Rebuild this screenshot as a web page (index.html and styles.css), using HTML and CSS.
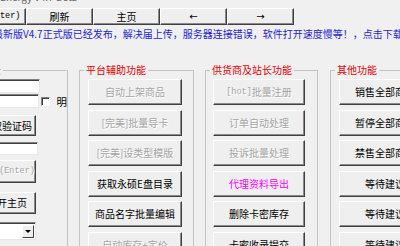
FILE: index.html
```html
<!DOCTYPE html>
<html>
<head>
  <meta charset="UTF-8">
  <title>平台工具</title>
  <link rel="stylesheet" href="styles.css">
</head>
<body>
  <div class="title-strip"><span>Energy v4.7 Beta</span></div>

  <div class="toolbar">
    <button class="btn tool-btn">登录<span class="mono">(Enter)</span></button>
    <button class="btn tool-btn">刷新</button>
    <button class="btn tool-btn">主页</button>
    <button class="btn tool-btn arrow">←</button>
    <button class="btn tool-btn arrow">→</button>
  </div>

  <div class="notice">最新版V4.7正式版已经发布，解决届上传，服务器连接错误，软件打开速度慢等！，点击下载</div>

  <div class="groups">
    <fieldset class="group group-login">
      <legend>会员登录</legend>
      <div class="login-body">
        <div class="login-row">
          <span class="login-label">账号</span>
          <span class="field"></span>
        </div>
        <div class="login-row row-pass">
          <span class="login-label">密码</span>
          <span class="field"></span>
          <span class="check"></span>
          <span class="check-text">明</span>
        </div>
        <button class="btn login-btn btn-code">获取验证码</button>
        <div class="login-row row-code">
          <span class="login-label">验证</span>
          <span class="field field-short"></span>
        </div>
        <button class="btn login-btn btn-enter is-disabled">登录<span class="mono">(Enter)</span></button>
        <button class="btn login-btn btn-home">打开主页</button>
        <div class="combo">
          <span class="combo-text"></span>
          <span class="combo-drop"><span class="tri"></span></span>
        </div>
      </div>
    </fieldset>

    <fieldset class="group group-platform">
      <legend>平台辅助功能</legend>
      <div class="group-body">
        <button class="btn is-disabled">自动上架商品</button>
        <button class="btn is-disabled">[完美]批量导卡</button>
        <button class="btn is-disabled">[完美]设类型模版</button>
        <button class="btn">获取永硕E盘目录</button>
        <button class="btn">商品名字批量编辑</button>
        <button class="btn is-disabled">自动库存+定价</button>
      </div>
    </fieldset>

    <fieldset class="group group-supply">
      <legend>供货商及站长功能</legend>
      <div class="group-body">
        <button class="btn is-disabled"><span class="mono">[hot]</span>批量注册</button>
        <button class="btn is-disabled">订单自动处理</button>
        <button class="btn is-disabled">投诉批量处理</button>
        <button class="btn is-pink">代理资料导出</button>
        <button class="btn">删除卡密库存</button>
        <button class="btn">卡密收录提交</button>
      </div>
    </fieldset>

    <fieldset class="group group-other">
      <legend>其他功能</legend>
      <div class="group-body">
        <button class="btn">销售全部商品</button>
        <button class="btn">暂停全部商品</button>
        <button class="btn">禁售全部商品</button>
        <button class="btn">等待建议</button>
        <button class="btn">等待建议</button>
        <button class="btn">等待建议</button>
      </div>
    </fieldset>
  </div>
</body>
</html>
```

FILE: styles.css
```css
* {
  box-sizing: border-box;
  margin: 0;
  padding: 0;
}

html, body {
  width: 400px;
  height: 246px;
  overflow: hidden;
}

body {
  background: #f0f0f0;
  color: #000;
  font-family: "Noto Sans CJK SC", "Noto Sans", sans-serif;
  font-size: 10px;
}

.mono {
  font-family: "Liberation Mono", monospace;
  font-size: 8.5px;
}

/* cut-off caption line at the very top */
.title-strip {
  height: 4px;
  overflow: hidden;
}

.title-strip span {
  display: block;
  margin-top: -9px;
  line-height: 12px;
  color: #666;
  white-space: nowrap;
}

/* classic raised button */
.btn {
  font: inherit;
  color: #000;
  background: #efefef;
  border: 1px solid;
  border-color: #fff #404040 #404040 #fff;
  box-shadow: inset -1px -1px 0 #8a8a8a;
  display: flex;
  align-items: center;
  justify-content: center;
  white-space: nowrap;
  overflow: hidden;
  line-height: 1;
}

.btn.is-disabled {
  color: #a4a4a4;
  text-shadow: 1px 1px 0 #fff;
}

.btn.is-pink {
  color: #ff00ff;
}

.toolbar {
  display: flex;
  margin-top: 4px;
  margin-left: -41px;
}

.tool-btn {
  width: 67px;
  height: 17px;
}

.tool-btn.arrow {
  font-family: "DejaVu Sans", sans-serif;
  font-size: 10px;
}

.notice {
  margin-top: 3px;
  margin-left: -7px;
  line-height: 12px;
  color: #1e1ed2;
  white-space: nowrap;
}

.groups {
  display: flex;
  gap: 11px;
  margin-top: 24px;
  margin-left: -70px;
}

.group {
  border: 1px solid #c4c4c4;
  height: 190px;
  min-width: 0;
  flex: none;
}

.group legend {
  margin-left: 4px;
  padding: 0 2px;
  line-height: 12px;
  color: #e00000;
  white-space: nowrap;
}

.group-body {
  display: flex;
  flex-direction: column;
  gap: 4.6px;
  padding: 3px 0 0 8px;
}

.group-body .btn {
  height: 26px;
}

.group-login {
  width: 138px;
}

.group-login legend {
  margin-left: 28px;
}

.group-platform {
  width: 115px;
}

.group-platform .btn {
  width: 94px;
}

.group-supply {
  width: 113px;
}

.group-supply .group-body {
  padding-left: 7px;
}

.group-supply .btn {
  width: 92px;
}

.group-other {
  width: 120px;
  margin-left: 1px;
}

.group-other .btn {
  width: 92px;
}

/* login box */
.login-body {
  display: flex;
  flex-direction: column;
  padding: 3px 0 0 8px;
}

.login-row {
  display: flex;
  align-items: center;
  height: 14px;
}

.login-label {
  width: 30px;
}

.field {
  width: 71px;
  height: 14px;
  background: #fff;
  border: 1px solid;
  border-color: #808080 #e8e8e8 #e8e8e8 #808080;
  box-shadow: inset 1px 1px 0 #404040;
}

.row-pass {
  margin-top: 1px;
}

.check {
  width: 9px;
  height: 9px;
  margin-left: 2px;
  background: #fff;
  border: 1px solid;
  border-color: #808080 #fff #fff #808080;
  box-shadow: inset 1px 1px 0 #404040;
}

.check-text {
  margin-left: 7px;
  font-size: 10.5px;
}

.login-btn {
  width: 58px;
  margin-left: 39px;
}

.btn-code {
  height: 21px;
  margin-top: 7px;
}

.row-code {
  margin-top: 6px;
  height: 13px;
}

.field-short {
  width: 69px;
  height: 13px;
}

.btn-enter {
  height: 23px;
  margin-top: 5px;
}

.btn-home {
  height: 22px;
  margin-top: 9px;
}

.combo {
  display: flex;
  width: 58px;
  height: 18px;
  margin-top: 8px;
  margin-left: 39px;
  background: #fff;
  border: 1px solid;
  border-color: #808080 #e8e8e8 #e8e8e8 #808080;
  box-shadow: inset 1px 1px 0 #404040;
  padding: 2px 1px 1px 2px;
}

.combo-text {
  flex: 1;
}

.combo-drop {
  width: 12px;
  background: #efefef;
  border: 1px solid;
  border-color: #fff #404040 #404040 #fff;
  display: flex;
  align-items: center;
  justify-content: center;
}

.tri {
  width: 0;
  height: 0;
  border-left: 3px solid transparent;
  border-right: 3px solid transparent;
  border-top: 3px solid #000;
}
```
